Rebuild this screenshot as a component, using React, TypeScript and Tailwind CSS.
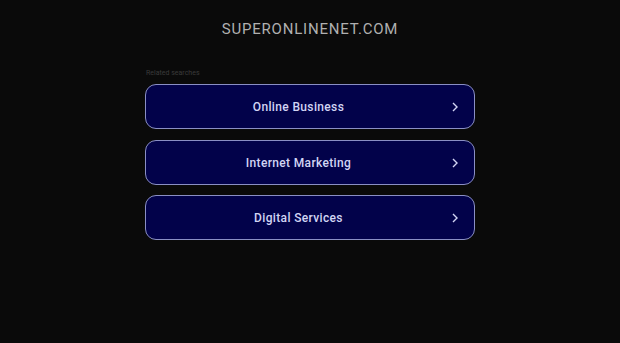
import React from "react";

const items = ["Online Business", "Internet Marketing", "Digital Services"];

export default function App() {
  return (
    <div className="min-h-[343px] w-full bg-[#0a0a0a]" style={{ fontFamily: "Roboto, Arial, 'Liberation Sans', sans-serif" }}>
      <div className="flex flex-col items-center pt-[20px]">
        <div className="text-[15px] leading-[18px] tracking-[0.8px] text-[#b0b0b0]">SUPERONLINENET.COM</div>
      </div>
      <div className="mx-auto mt-[31px] w-[330px]">
        <div className="text-[7px] leading-[9px] text-[#3a3a3a] pl-[1px]">Related searches</div>
        <div className="mt-[6px] flex flex-col">
          {items.map((t, i) => (
            <div
              key={t}
              className={`relative flex h-[45px] items-center justify-center rounded-[11px] border border-[#8a8fc4] bg-[#02024a] pr-[23px] ${i === 1 ? "mt-[11px]" : i === 2 ? "mt-[10px]" : ""}`}
            >
              <span className="text-[12px] font-medium text-[#d2d5f4] tracking-[0.35px]">{t}</span>
              <svg className="absolute right-[15px] top-1/2 -translate-y-1/2" width="8" height="11" viewBox="0 0 8 11" fill="none">
                <path d="M2 1.5 L6 5.5 L2 9.5" stroke="#d2d5f4" strokeWidth="1.4" />
              </svg>
            </div>
          ))}
        </div>
      </div>
    </div>
  );
}
